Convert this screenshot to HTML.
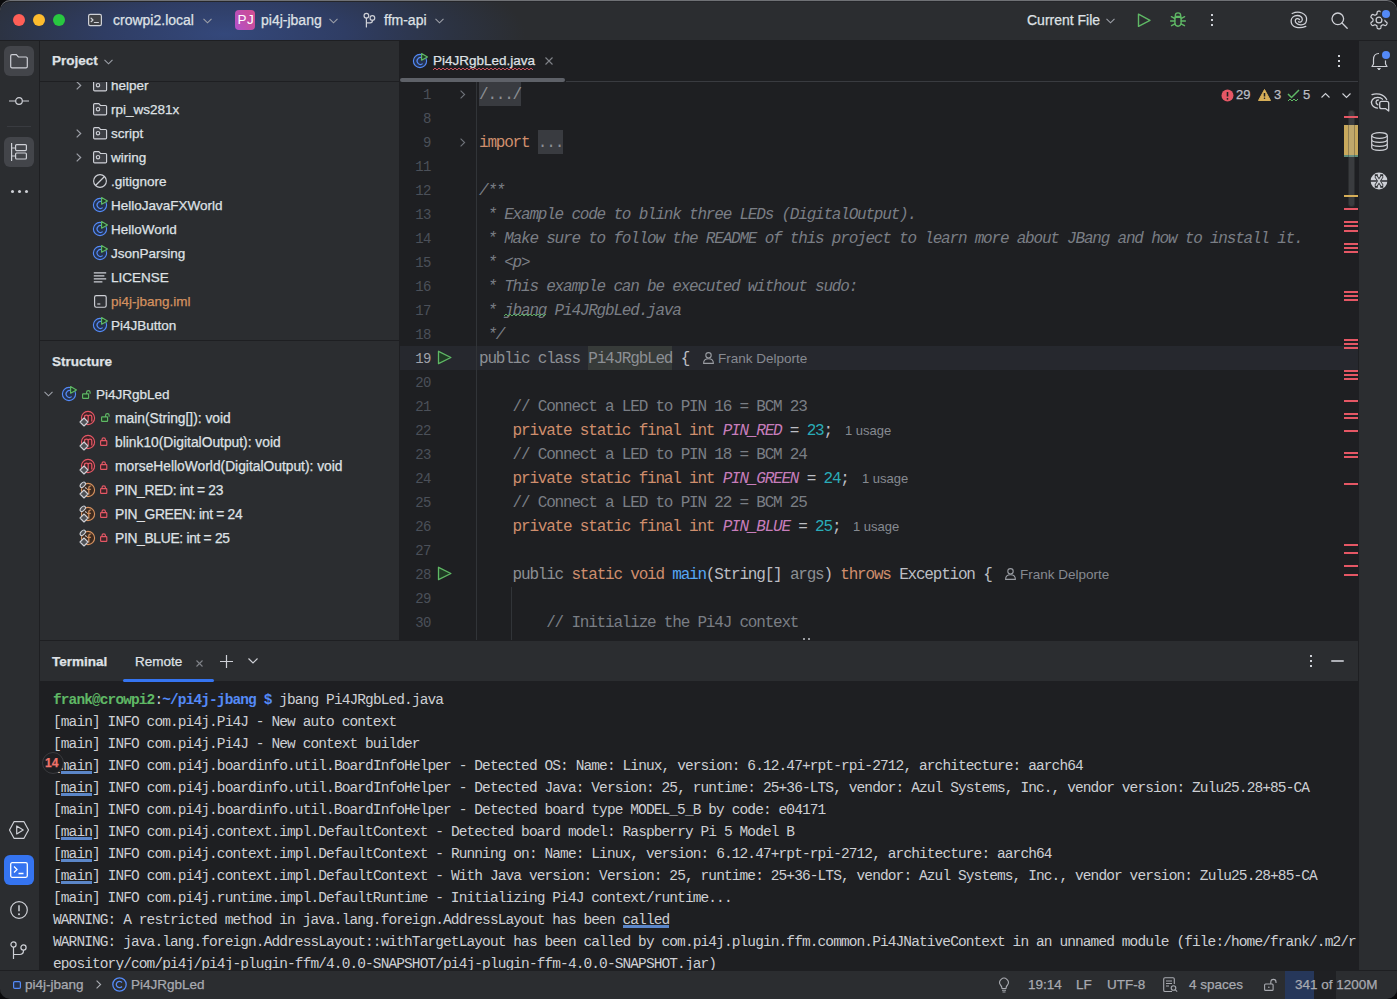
<!DOCTYPE html>
<html><head><meta charset="utf-8">
<style>
*{margin:0;padding:0;box-sizing:border-box}
html,body{width:1397px;height:999px;overflow:hidden;background:#0a0a0c}
body{position:relative;font-family:"Liberation Sans",sans-serif;color:#DFE1E5;font-size:13px}
.a{position:absolute}
svg{position:absolute;overflow:visible}
#win{position:absolute;left:0;top:0;width:1397px;height:999px;background:#2B2D30;border-radius:10px;overflow:hidden}
#title{left:0;top:0;width:1397px;height:40px;background:radial-gradient(ellipse 300px 85px at 225px 34px,#34487B 0%,#2F3D64 40%,#2C3343 75%,#2B2D30 100%)}
.code{position:absolute;left:479px;font-family:"Liberation Mono",monospace;font-size:16px;letter-spacing:-1.2px;white-space:pre;line-height:24px;height:24px;color:#BCBEC4}
.term{position:absolute;left:53px;font-family:"Liberation Mono",monospace;font-size:14.5px;letter-spacing:-0.9px;white-space:pre;line-height:22px;height:22px;color:#CDCFD4}
u{text-decoration:none;position:relative}u::after{content:"";position:absolute;left:0;right:0;top:13px;height:3px;background:#5B86C8}
.t{position:absolute;white-space:nowrap;line-height:16px;-webkit-text-stroke:0.25px currentColor}
.ln{position:absolute;font-family:"Liberation Mono",monospace;font-size:14px;letter-spacing:-0.5px;color:#4B5059;text-align:right;width:60px;left:371px;line-height:24px}
.kw{color:#CF8E6D}.cm{color:#7A7E85}.doc{color:#7A7E85;font-style:italic}.st{color:#C77DBB;font-style:italic}.nu{color:#2AACB8}.fn{color:#56A8F5}.gr{color:#8C8F94}
.hint{position:absolute;font-family:"Liberation Sans",sans-serif;font-size:13px;color:#868A91;white-space:nowrap;line-height:24px;margin-top:1px}
.ic{position:absolute}
</style></head><body>
<div id="win">
<div class="a" id="title" style="left:0;top:0;width:1397px;height:40px"></div>
<div class="a" style="left:0;top:0;width:1397px;height:1px;background:#4a4c52;opacity:.6"></div>
<div class="a" style="left:0;top:40px;width:1397px;height:1px;background:#1E1F22"></div>
<div class="a" style="left:13px;top:14px;width:12px;height:12px;border-radius:50%;background:#FF5F57"></div>
<div class="a" style="left:33px;top:14px;width:12px;height:12px;border-radius:50%;background:#FEBC2E"></div>
<div class="a" style="left:53px;top:14px;width:12px;height:12px;border-radius:50%;background:#28C840"></div>
<svg style="left:84px;top:8px" width="24" height="24"><rect x="4.6" y="6.4" width="12.8" height="11.2" rx="1.6" fill="#404145" stroke="#CED0D6" stroke-width="1.2"/><path d="M7.1 10.2l1.9 1.75-1.9 1.75" fill="none" stroke="#CED0D6" stroke-width="1.2" stroke-linecap="round" stroke-linejoin="round"/><path d="M10.4 14.5h4" stroke="#CED0D6" stroke-width="1.2" stroke-linecap="round"/></svg>
<div class="t" style="left:113px;top:12px;font-size:14px;color:#DFE1E5;">crowpi2.local</div>
<svg style="left:203px;top:18px" width="9" height="6"><path d="M.5 .8l4 4 4-4" fill="none" stroke="#9DA0A8" stroke-width="1.1"/></svg>
<div class="a" style="left:235px;top:10px;width:20px;height:20px;border-radius:4px;background:linear-gradient(60deg,#B152CC,#C84D9E 70%,#D24F92)"></div>
<div class="t" style="left:237.5px;top:12.3px;font-size:13.5px;color:#fff;letter-spacing:.4px;-webkit-text-stroke:0">PJ</div>
<div class="t" style="left:261px;top:12px;font-size:14px;color:#DFE1E5;">pi4j-jbang</div>
<svg style="left:329px;top:18px" width="9" height="6"><path d="M.5 .8l4 4 4-4" fill="none" stroke="#9DA0A8" stroke-width="1.1"/></svg>
<svg style="left:358px;top:8px" width="24" height="24"><circle cx="8.4" cy="7.7" r="2.35" fill="none" stroke="#CED0D6" stroke-width="1.2"/><circle cx="14.4" cy="9.9" r="2.35" fill="none" stroke="#CED0D6" stroke-width="1.2"/><path d="M8.4 10.05V19M14.4 12.25v.6q0 2-2.2 2H8.4" fill="none" stroke="#CED0D6" stroke-width="1.2" stroke-linecap="round"/></svg>
<div class="t" style="left:384px;top:12px;font-size:14px;color:#DFE1E5;">ffm-api</div>
<svg style="left:435px;top:18px" width="9" height="6"><path d="M.5 .8l4 4 4-4" fill="none" stroke="#9DA0A8" stroke-width="1.1"/></svg>
<div class="t" style="left:1027px;top:12px;font-size:14px;color:#DFE1E5;">Current File</div>
<svg style="left:1106px;top:18px" width="9" height="6"><path d="M.5 .8l4 4 4-4" fill="none" stroke="#9DA0A8" stroke-width="1.1"/></svg>
<svg style="left:1137px;top:13px" width="15" height="15"><path d="M1.5 1.2v12.2l11.5-6.1z" fill="none" stroke="#5FB865" stroke-width="1.4" stroke-linejoin="round"/></svg>
<svg style="left:1170px;top:12px" width="16" height="16"><path d="M5.3 4.4V3.6a2.7 2.7 0 0 1 5.4 0v.8z" fill="none" stroke="#5FB865" stroke-width="1.35" stroke-linejoin="round"/><path d="M4.9 5.2h6.2v5.9a3.1 3.1 0 0 1-6.2 0z" fill="none" stroke="#5FB865" stroke-width="1.35" stroke-linejoin="round"/><path d="M4.9 6.6L1.4 4.6M4.9 9H.6M4.9 11.8L1.5 13.7M11.1 6.6l3.5-2M11.1 9h4.3M11.1 11.8l3.4 1.9" fill="none" stroke="#5FB865" stroke-width="1.35" stroke-linecap="round"/></svg>
<div class="a" style="left:1211px;top:14px;width:2px;height:2px;background:#CED0D6;box-shadow:0 5px 0 #CED0D6,0 10px 0 #CED0D6"></div>
<svg style="left:1287px;top:8px" width="24" height="24"><path d="M5.2 5.5C8 4.2 12 3.8 15 5C18.5 6.5 20 9.5 19.5 12.5C19 15.5 16.5 17 13.5 16.8C10 16.6 8 14.5 8.3 12.3C8.6 10.5 11 10 12.5 11.5M18.8 18.3C16 19.5 12.5 20 9.5 19.3C6 18.5 4 16 4.1 12.7C4.2 9.5 7 7.5 10.3 7.5C13.5 7.5 15.5 9.5 15.3 11.8C15.1 13.8 13 14.8 11.5 13.8" fill="none" stroke="#CED0D6" stroke-width="1.3" stroke-linecap="round"/></svg>
<svg style="left:1331px;top:12px" width="17" height="17"><circle cx="6.8" cy="6.8" r="5.8" fill="none" stroke="#CED0D6" stroke-width="1.3"/><path d="M11 11l5.2 5.2" stroke="#CED0D6" stroke-width="1.3" stroke-linecap="round"/></svg>
<svg style="left:1370px;top:11px" width="18" height="18"><path d="M14.99 9.00 L14.99 9.16 L14.99 9.31 L14.99 9.47 L15.00 9.63 L15.02 9.79 L15.08 9.96 L15.19 10.15 L15.40 10.36 L15.73 10.62 L16.15 10.92 L16.56 11.24 L16.85 11.55 L17.02 11.84 L17.07 12.10 L17.06 12.34 L17.01 12.57 L16.94 12.79 L16.85 13.00 L16.74 13.21 L16.63 13.41 L16.51 13.60 L16.39 13.80 L16.25 13.98 L16.09 14.15 L15.92 14.31 L15.72 14.44 L15.47 14.52 L15.14 14.53 L14.72 14.42 L14.23 14.23 L13.76 14.02 L13.38 13.86 L13.09 13.79 L12.87 13.78 L12.70 13.82 L12.54 13.88 L12.40 13.95 L12.26 14.03 L12.13 14.10 L11.99 14.18 L11.86 14.26 L11.72 14.34 L11.59 14.42 L11.45 14.51 L11.32 14.61 L11.21 14.74 L11.10 14.94 L11.02 15.22 L10.97 15.63 L10.92 16.15 L10.84 16.66 L10.72 17.08 L10.55 17.36 L10.35 17.54 L10.14 17.65 L9.92 17.72 L9.69 17.77 L9.46 17.79 L9.23 17.81 L9.00 17.81 L8.77 17.81 L8.54 17.79 L8.31 17.77 L8.08 17.72 L7.86 17.65 L7.65 17.54 L7.45 17.36 L7.28 17.08 L7.16 16.66 L7.08 16.15 L7.03 15.63 L6.98 15.22 L6.90 14.94 L6.79 14.74 L6.68 14.61 L6.55 14.51 L6.41 14.42 L6.28 14.34 L6.14 14.26 L6.01 14.18 L5.87 14.10 L5.74 14.03 L5.60 13.95 L5.46 13.88 L5.30 13.82 L5.13 13.78 L4.91 13.79 L4.62 13.86 L4.24 14.02 L3.77 14.23 L3.28 14.42 L2.86 14.53 L2.53 14.52 L2.28 14.44 L2.08 14.31 L1.91 14.15 L1.75 13.98 L1.61 13.80 L1.49 13.60 L1.37 13.41 L1.26 13.21 L1.15 13.00 L1.06 12.79 L0.99 12.57 L0.94 12.34 L0.93 12.10 L0.98 11.84 L1.15 11.55 L1.44 11.24 L1.85 10.92 L2.27 10.62 L2.60 10.36 L2.81 10.15 L2.92 9.96 L2.98 9.79 L3.00 9.63 L3.01 9.47 L3.01 9.31 L3.01 9.16 L3.01 9.00 L3.01 8.84 L3.01 8.69 L3.01 8.53 L3.00 8.37 L2.98 8.21 L2.92 8.04 L2.81 7.85 L2.60 7.64 L2.27 7.38 L1.85 7.08 L1.44 6.76 L1.15 6.45 L0.98 6.16 L0.93 5.90 L0.94 5.66 L0.99 5.43 L1.06 5.21 L1.15 5.00 L1.26 4.79 L1.37 4.59 L1.49 4.40 L1.61 4.20 L1.75 4.02 L1.91 3.85 L2.08 3.69 L2.28 3.56 L2.53 3.48 L2.86 3.47 L3.28 3.58 L3.77 3.77 L4.24 3.98 L4.62 4.14 L4.91 4.21 L5.13 4.22 L5.30 4.18 L5.46 4.12 L5.60 4.05 L5.74 3.97 L5.87 3.90 L6.01 3.82 L6.14 3.74 L6.28 3.66 L6.41 3.58 L6.55 3.49 L6.68 3.39 L6.79 3.26 L6.90 3.06 L6.98 2.78 L7.03 2.37 L7.08 1.85 L7.16 1.34 L7.28 0.92 L7.45 0.64 L7.65 0.46 L7.86 0.35 L8.08 0.28 L8.31 0.23 L8.54 0.21 L8.77 0.19 L9.00 0.19 L9.23 0.19 L9.46 0.21 L9.69 0.23 L9.92 0.28 L10.14 0.35 L10.35 0.46 L10.55 0.64 L10.72 0.92 L10.84 1.34 L10.92 1.85 L10.97 2.37 L11.02 2.78 L11.10 3.06 L11.21 3.26 L11.32 3.39 L11.45 3.49 L11.59 3.58 L11.72 3.66 L11.86 3.74 L11.99 3.82 L12.13 3.90 L12.26 3.97 L12.40 4.05 L12.54 4.12 L12.70 4.18 L12.87 4.22 L13.09 4.21 L13.38 4.14 L13.76 3.98 L14.23 3.77 L14.72 3.58 L15.14 3.47 L15.47 3.48 L15.72 3.56 L15.92 3.69 L16.09 3.85 L16.25 4.02 L16.39 4.20 L16.51 4.40 L16.63 4.59 L16.74 4.79 L16.85 5.00 L16.94 5.21 L17.01 5.43 L17.06 5.66 L17.07 5.90 L17.02 6.16 L16.85 6.45 L16.56 6.76 L16.15 7.08 L15.73 7.38 L15.40 7.64 L15.19 7.85 L15.08 8.04 L15.02 8.21 L15.00 8.37 L14.99 8.53 L14.99 8.69 L14.99 8.84 L14.99 9.00z" fill="none" stroke="#CED0D6" stroke-width="1.25" stroke-linejoin="round"/><circle cx="9" cy="9" r="2.9" fill="none" stroke="#CED0D6" stroke-width="1.25"/></svg>
<div class="a" style="left:1381.5px;top:9.5px;width:8px;height:8px;border-radius:50%;background:#548AF7;box-shadow:0 0 0 2px #2B2D30"></div>
<div class="a" style="left:39px;top:41px;width:1px;height:930px;background:#1E1F22"></div>
<div class="a" style="left:400px;top:41px;width:959px;height:599px;background:#1E1F22"></div>
<div class="a" style="left:399px;top:41px;width:1px;height:599px;background:#1E1F22"></div>
<div class="a" style="left:0;top:0;width:1358px;height:640px;overflow:hidden">
<div class="a" style="left:400px;top:346px;width:958px;height:24px;background:#26282E"></div>
<div class="a" style="left:476px;top:82px;width:1px;height:558px;background:#313438"></div>
<div class="a" style="left:479px;top:82px;width:42px;height:24px;background:#393B40"></div>
<div class="a" style="left:537.8px;top:130px;width:25.2px;height:24px;background:#393B40"></div>
<div class="a" style="left:588.2px;top:346px;width:84px;height:24px;background:#373B39"></div>
<div class="ln" style="top:83px;color:#4B5059">1</div>
<div class="ln" style="top:107px;color:#4B5059">8</div>
<div class="ln" style="top:131px;color:#4B5059">9</div>
<div class="ln" style="top:155px;color:#4B5059">11</div>
<div class="ln" style="top:179px;color:#4B5059">12</div>
<div class="ln" style="top:203px;color:#4B5059">13</div>
<div class="ln" style="top:227px;color:#4B5059">14</div>
<div class="ln" style="top:251px;color:#4B5059">15</div>
<div class="ln" style="top:275px;color:#4B5059">16</div>
<div class="ln" style="top:299px;color:#4B5059">17</div>
<div class="ln" style="top:323px;color:#4B5059">18</div>
<div class="ln" style="top:347px;color:#A1A3AB">19</div>
<div class="ln" style="top:371px;color:#4B5059">20</div>
<div class="ln" style="top:395px;color:#4B5059">21</div>
<div class="ln" style="top:419px;color:#4B5059">22</div>
<div class="ln" style="top:443px;color:#4B5059">23</div>
<div class="ln" style="top:467px;color:#4B5059">24</div>
<div class="ln" style="top:491px;color:#4B5059">25</div>
<div class="ln" style="top:515px;color:#4B5059">26</div>
<div class="ln" style="top:539px;color:#4B5059">27</div>
<div class="ln" style="top:563px;color:#4B5059">28</div>
<div class="ln" style="top:587px;color:#4B5059">29</div>
<div class="ln" style="top:611px;color:#4B5059">30</div>
<div class="ln" style="top:635px;color:#4B5059">31</div>
<div class="code" style="top:83px"><span style="color:#8C8F94">/.../</span></div>
<div class="code" style="top:131px"><span class="kw">import</span> <span style="color:#8C8F94">...</span></div>
<div class="code" style="top:179px"><span class="doc">/**</span></div>
<div class="code" style="top:203px"><span class="doc"> * Example code to blink three LEDs (DigitalOutput).</span></div>
<div class="code" style="top:227px"><span class="doc"> * Make sure to follow the README of this project to learn more about JBang and how to install it.</span></div>
<div class="code" style="top:251px"><span class="doc"> * &lt;p&gt;</span></div>
<div class="code" style="top:275px"><span class="doc"> * This example can be executed without sudo:</span></div>
<div class="code" style="top:299px"><span class="doc"> * jbang Pi4JRgbLed.java</span></div>
<div class="code" style="top:323px"><span class="doc"> */</span></div>
<div class="code" style="top:347px"><span class="gr">public class </span><span class="gr">Pi4JRgbLed</span> {</div>
<div class="code" style="top:395px"><span class="cm">    // Connect a LED to PIN 16 = BCM 23</span></div>
<div class="code" style="top:419px">    <span class="kw">private static final int </span><span class="st">PIN_RED</span> = <span class="nu">23</span>;</div>
<div class="code" style="top:443px"><span class="cm">    // Connect a LED to PIN 18 = BCM 24</span></div>
<div class="code" style="top:467px">    <span class="kw">private static final int </span><span class="st">PIN_GREEN</span> = <span class="nu">24</span>;</div>
<div class="code" style="top:491px"><span class="cm">    // Connect a LED to PIN 22 = BCM 25</span></div>
<div class="code" style="top:515px">    <span class="kw">private static final int </span><span class="st">PIN_BLUE</span> = <span class="nu">25</span>;</div>
<div class="code" style="top:563px">    <span class="gr">public </span><span class="kw">static void </span><span class="fn">main</span>(String[] <span class="gr">args</span>) <span class="kw">throws</span> Exception {</div>
<div class="code" style="top:611px"><span class="cm">        // Initialize the Pi4J context</span></div>
</div>
<div class="a" style="left:40px;top:81px;width:359px;height:1px;background:#1E1F22"></div>
<div class="a" style="left:40px;top:640px;width:1319px;height:1px;background:#1E1F22"></div>
<div class="a" style="left:40px;top:681px;width:1319px;height:289px;background:#1E1F22"></div>
<div class="a" style="left:1358px;top:641px;width:1px;height:40px;background:#1E1F22"></div>
<div class="a" style="left:40px;top:681px;width:1318px;height:289px;overflow:hidden">
<div class="term" style="top:8px;left:13px"><b style="color:#5FB865">frank@crowpi2</b>:<b style="color:#548AF7">~/pi4j-jbang $</b> jbang Pi4JRgbLed.java</div>
<div class="term" style="top:30px;left:13px">[main] INFO com.pi4j.Pi4J - New auto context</div>
<div class="term" style="top:52px;left:13px">[main] INFO com.pi4j.Pi4J - New context builder</div>
<div class="term" style="top:74px;left:13px">[<u>main</u>] INFO com.pi4j.boardinfo.util.BoardInfoHelper - Detected OS: Name: Linux, version: 6.12.47+rpt-rpi-2712, architecture: aarch64</div>
<div class="term" style="top:96px;left:13px">[<u>main</u>] INFO com.pi4j.boardinfo.util.BoardInfoHelper - Detected Java: Version: 25, runtime: 25+36-LTS, vendor: Azul Systems, Inc., vendor version: Zulu25.28+85-CA</div>
<div class="term" style="top:118px;left:13px">[main] INFO com.pi4j.boardinfo.util.BoardInfoHelper - Detected board type MODEL_5_B by code: e04171</div>
<div class="term" style="top:140px;left:13px">[<u>main</u>] INFO com.pi4j.context.impl.DefaultContext - Detected board model: Raspberry Pi 5 Model B</div>
<div class="term" style="top:162px;left:13px">[<u>main</u>] INFO com.pi4j.context.impl.DefaultContext - Running on: Name: Linux, version: 6.12.47+rpt-rpi-2712, architecture: aarch64</div>
<div class="term" style="top:184px;left:13px">[<u>main</u>] INFO com.pi4j.context.impl.DefaultContext - With Java version: Version: 25, runtime: 25+36-LTS, vendor: Azul Systems, Inc., vendor version: Zulu25.28+85-CA</div>
<div class="term" style="top:206px;left:13px">[main] INFO com.pi4j.runtime.impl.DefaultRuntime - Initializing Pi4J context/runtime...</div>
<div class="term" style="top:228px;left:13px">WARNING: A restricted method in java.lang.foreign.AddressLayout has been <u>called</u></div>
<div class="term" style="top:250px;left:13px">WARNING: java.lang.foreign.AddressLayout::withTargetLayout has been called by com.pi4j.plugin.ffm.common.Pi4JNativeContext in an unnamed module (file:/home/frank/.m2/r</div>
<div class="term" style="top:272px;left:13px">epository/com/pi4j/pi4j-plugin-ffm/4.0.0-SNAPSHOT/pi4j-plugin-ffm-4.0.0-SNAPSHOT.jar)</div>
</div>
<div class="a" style="left:42px;top:752px;width:22px;height:22px;border-radius:50%;background:#1E1F22;border:1px solid #3A3B3F"></div>
<div class="t" style="left:45px;top:757px;font-size:12px;color:#F0736B;font-weight:bold;line-height:12px">14</div>
<div class="t" style="left:52px;top:654px;font-size:13.5px;color:#DFE1E5;font-weight:bold">Terminal</div>
<div class="t" style="left:135px;top:654px;font-size:13.5px;color:#DFE1E5;">Remote</div>
<svg style="left:196px;top:660px" width="7" height="7"><path d="M.5 .5l6 6M6.5 .5l-6 6" stroke="#808389" stroke-width="1.1"/></svg>
<svg style="left:220px;top:655px" width="13" height="13"><path d="M6.5 0v13M0 6.5h13" stroke="#CED0D6" stroke-width="1.2"/></svg>
<svg style="left:248px;top:658px" width="10" height="6"><path d="M.5 .5l4.5 4.5 4.5-4.5" fill="none" stroke="#CED0D6" stroke-width="1.2"/></svg>
<div class="a" style="left:123px;top:679px;width:91px;height:3px;border-radius:2px;background:#3574F0"></div>
<div class="a" style="left:1310px;top:655px;width:2px;height:2px;background:#CED0D6;box-shadow:0 5px 0 #CED0D6,0 10px 0 #CED0D6"></div>
<div class="a" style="left:1331px;top:660px;width:12.5px;height:2px;border-radius:1px;background:#AEB0B6"></div>
<div class="t" style="left:52px;top:53px;font-size:13.5px;color:#DFE1E5;font-weight:bold">Project</div>
<svg style="left:104px;top:59px" width="9" height="6"><path d="M.5 .8l4 4 4-4" fill="none" stroke="#9DA0A8" stroke-width="1.1"/></svg>
<div class="a" style="left:0px;top:82px;width:399px;height:258px;overflow:hidden">
<svg style="left:76px;top:-1px" width="6" height="9"><path d="M.7 .6l4 3.9-4 3.9" fill="none" stroke="#9DA0A8" stroke-width="1.2"/></svg><svg style="left:93px;top:-3px" width="14" height="12"><path d="M.6 1.7q0-1.1 1.1-1.1h4.1l1.7 1.9h5q1.1 0 1.1 1.1v7.2q0 1.1-1.1 1.1H1.7q-1.1 0-1.1-1.1z" fill="#3D3F44" stroke="#CED0D6" stroke-width="1.15"/><circle cx="5" cy="6.2" r="1.7" fill="none" stroke="#CED0D6" stroke-width="1.1"/></svg><div class="t" style="left:111px;top:-4px;font-size:13.5px;color:#DFE1E5">helper</div>
<svg style="left:93px;top:21px" width="14" height="12"><path d="M.6 1.7q0-1.1 1.1-1.1h4.1l1.7 1.9h5q1.1 0 1.1 1.1v7.2q0 1.1-1.1 1.1H1.7q-1.1 0-1.1-1.1z" fill="#3D3F44" stroke="#CED0D6" stroke-width="1.15"/><circle cx="5" cy="6.2" r="1.7" fill="none" stroke="#CED0D6" stroke-width="1.1"/></svg><div class="t" style="left:111px;top:20px;font-size:13.5px;color:#DFE1E5">rpi_ws281x</div>
<svg style="left:76px;top:47px" width="6" height="9"><path d="M.7 .6l4 3.9-4 3.9" fill="none" stroke="#9DA0A8" stroke-width="1.2"/></svg><svg style="left:93px;top:45px" width="14" height="12"><path d="M.6 1.7q0-1.1 1.1-1.1h4.1l1.7 1.9h5q1.1 0 1.1 1.1v7.2q0 1.1-1.1 1.1H1.7q-1.1 0-1.1-1.1z" fill="#3D3F44" stroke="#CED0D6" stroke-width="1.15"/><circle cx="5" cy="6.2" r="1.7" fill="none" stroke="#CED0D6" stroke-width="1.1"/></svg><div class="t" style="left:111px;top:44px;font-size:13.5px;color:#DFE1E5">script</div>
<svg style="left:76px;top:71px" width="6" height="9"><path d="M.7 .6l4 3.9-4 3.9" fill="none" stroke="#9DA0A8" stroke-width="1.2"/></svg><svg style="left:93px;top:69px" width="14" height="12"><path d="M.6 1.7q0-1.1 1.1-1.1h4.1l1.7 1.9h5q1.1 0 1.1 1.1v7.2q0 1.1-1.1 1.1H1.7q-1.1 0-1.1-1.1z" fill="#3D3F44" stroke="#CED0D6" stroke-width="1.15"/><circle cx="5" cy="6.2" r="1.7" fill="none" stroke="#CED0D6" stroke-width="1.1"/></svg><div class="t" style="left:111px;top:68px;font-size:13.5px;color:#DFE1E5">wiring</div>
<svg style="left:93px;top:92px" width="14" height="14"><circle cx="7" cy="7" r="6.4" fill="none" stroke="#CED0D6" stroke-width="1.15"/><path d="M2.5 11.5l9-9" stroke="#CED0D6" stroke-width="1.15"/></svg><div class="t" style="left:111px;top:92px;font-size:13.5px;color:#DFE1E5">.gitignore</div>
<svg style="left:92px;top:114px" width="17" height="17"><circle cx="8" cy="9" r="6.6" fill="#25324D" stroke="#548AF7" stroke-width="1.15"/><path d="M10.7 6.4A3.4 3.4 0 1 0 10.7 11.6" fill="none" stroke="#548AF7" stroke-width="1.15"/><path d="M9.6 1.3v7.1l6.1-3.5z" fill="#1F3A24" stroke="#1E1F22" stroke-width="2.6" stroke-linejoin="round" opacity=".0"/><path d="M9.6 1.5v6.7l5.9-3.3z" fill="#1F3A24" stroke="#5FB865" stroke-width="1.15" stroke-linejoin="round"/></svg><div class="t" style="left:111px;top:116px;font-size:13.5px;color:#DFE1E5">HelloJavaFXWorld</div>
<svg style="left:92px;top:138px" width="17" height="17"><circle cx="8" cy="9" r="6.6" fill="#25324D" stroke="#548AF7" stroke-width="1.15"/><path d="M10.7 6.4A3.4 3.4 0 1 0 10.7 11.6" fill="none" stroke="#548AF7" stroke-width="1.15"/><path d="M9.6 1.3v7.1l6.1-3.5z" fill="#1F3A24" stroke="#1E1F22" stroke-width="2.6" stroke-linejoin="round" opacity=".0"/><path d="M9.6 1.5v6.7l5.9-3.3z" fill="#1F3A24" stroke="#5FB865" stroke-width="1.15" stroke-linejoin="round"/></svg><div class="t" style="left:111px;top:140px;font-size:13.5px;color:#DFE1E5">HelloWorld</div>
<svg style="left:92px;top:162px" width="17" height="17"><circle cx="8" cy="9" r="6.6" fill="#25324D" stroke="#548AF7" stroke-width="1.15"/><path d="M10.7 6.4A3.4 3.4 0 1 0 10.7 11.6" fill="none" stroke="#548AF7" stroke-width="1.15"/><path d="M9.6 1.3v7.1l6.1-3.5z" fill="#1F3A24" stroke="#1E1F22" stroke-width="2.6" stroke-linejoin="round" opacity=".0"/><path d="M9.6 1.5v6.7l5.9-3.3z" fill="#1F3A24" stroke="#5FB865" stroke-width="1.15" stroke-linejoin="round"/></svg><div class="t" style="left:111px;top:164px;font-size:13.5px;color:#DFE1E5">JsonParsing</div>
<svg style="left:93px;top:190px" width="14" height="11"><path d="M.8 .8h12.4M.8 3.8h10.6M.8 6.8h12.4M.8 9.8h8.6" stroke="#CED0D6" stroke-width="1.15"/></svg><div class="t" style="left:111px;top:188px;font-size:13.5px;color:#DFE1E5">LICENSE</div>
<svg style="left:94px;top:213px" width="13" height="13"><rect x=".6" y=".6" width="11.6" height="11.6" rx="1.6" fill="#2F3135" stroke="#CED0D6" stroke-width="1.15"/><path d="M3.3 9h3" stroke="#CED0D6" stroke-width="1.2"/></svg><div class="t" style="left:111px;top:212px;font-size:13.5px;color:#D5915F">pi4j-jbang.iml</div>
<svg style="left:92px;top:234px" width="17" height="17"><circle cx="8" cy="9" r="6.6" fill="#25324D" stroke="#548AF7" stroke-width="1.15"/><path d="M10.7 6.4A3.4 3.4 0 1 0 10.7 11.6" fill="none" stroke="#548AF7" stroke-width="1.15"/><path d="M9.6 1.3v7.1l6.1-3.5z" fill="#1F3A24" stroke="#1E1F22" stroke-width="2.6" stroke-linejoin="round" opacity=".0"/><path d="M9.6 1.5v6.7l5.9-3.3z" fill="#1F3A24" stroke="#5FB865" stroke-width="1.15" stroke-linejoin="round"/></svg><div class="t" style="left:111px;top:236px;font-size:13.5px;color:#DFE1E5">Pi4JButton</div>
</div>
<div class="a" style="left:40px;top:340px;width:359px;height:1px;background:#1E1F22"></div>
<div class="t" style="left:52px;top:354px;font-size:13.5px;color:#DFE1E5;font-weight:bold">Structure</div>
<svg style="left:44px;top:391px" width="9" height="6"><path d="M.5 .8l4 4 4-4" fill="none" stroke="#9DA0A8" stroke-width="1.1"/></svg>
<svg style="left:61px;top:385px" width="17" height="17"><circle cx="8" cy="9" r="6.6" fill="#25324D" stroke="#548AF7" stroke-width="1.15"/><path d="M10.7 6.4A3.4 3.4 0 1 0 10.7 11.6" fill="none" stroke="#548AF7" stroke-width="1.15"/><path d="M9.6 1.3v7.1l6.1-3.5z" fill="#1F3A24" stroke="#1E1F22" stroke-width="2.6" stroke-linejoin="round" opacity=".0"/><path d="M9.6 1.5v6.7l5.9-3.3z" fill="#1F3A24" stroke="#5FB865" stroke-width="1.15" stroke-linejoin="round"/></svg><svg style="left:82px;top:390px" width="9" height="9"><rect x=".6" y="3.9" width="6" height="4.5" rx=".6" fill="#1F3A24" stroke="#5FB865" stroke-width="1.15"/><path d="M4.6 3.9V2.3a1.75 1.75 0 0 1 3.5 0v1.4" fill="none" stroke="#5FB865" stroke-width="1.15"/></svg><div class="t" style="left:96px;top:387px;font-size:13.5px;color:#DFE1E5">Pi4JRgbLed</div>
<svg style="left:79px;top:409px" width="18" height="18"><circle cx="9" cy="9" r="6.6" fill="#3B2326" stroke="#E55765" stroke-width="1.15"/><path d="M5.6 12.4V6.4M5.6 7.7q0-1.6 1.8-1.6t1.8 1.6v4.7M9.2 7.7q0-1.6 1.8-1.6t1.8 1.6v4.7" fill="none" stroke="#E55765" stroke-width="1.2"/><path d="M5 9l4 4-4 4-4-4z" fill="#4E5055" stroke="#CED0D6" stroke-width="1.1" stroke-linejoin="round"/></svg><svg style="left:101px;top:413px" width="9" height="9"><rect x=".6" y="3.9" width="6" height="4.5" rx=".6" fill="#1F3A24" stroke="#5FB865" stroke-width="1.15"/><path d="M4.6 3.9V2.3a1.75 1.75 0 0 1 3.5 0v1.4" fill="none" stroke="#5FB865" stroke-width="1.15"/></svg><div class="t" style="left:115px;top:411px;font-size:13.8px;color:#DFE1E5;">main(String[]): void</div>
<svg style="left:79px;top:433px" width="18" height="18"><circle cx="9" cy="9" r="6.6" fill="#3B2326" stroke="#E55765" stroke-width="1.15"/><path d="M5.6 12.4V6.4M5.6 7.7q0-1.6 1.8-1.6t1.8 1.6v4.7M9.2 7.7q0-1.6 1.8-1.6t1.8 1.6v4.7" fill="none" stroke="#E55765" stroke-width="1.2"/><path d="M5 9l4 4-4 4-4-4z" fill="#4E5055" stroke="#CED0D6" stroke-width="1.1" stroke-linejoin="round"/></svg><svg style="left:100px;top:437px" width="8" height="9"><rect x=".6" y="3.6" width="6.2" height="4.8" rx=".6" fill="#3A2327" stroke="#E55765" stroke-width="1.15"/><path d="M2 3.6V2.5a1.7 1.7 0 0 1 3.4 0v1.1" fill="none" stroke="#E55765" stroke-width="1.15"/></svg><div class="t" style="left:115px;top:435px;font-size:13.8px;color:#DFE1E5;">blink10(DigitalOutput): void</div>
<svg style="left:79px;top:457px" width="18" height="18"><circle cx="9" cy="9" r="6.6" fill="#3B2326" stroke="#E55765" stroke-width="1.15"/><path d="M5.6 12.4V6.4M5.6 7.7q0-1.6 1.8-1.6t1.8 1.6v4.7M9.2 7.7q0-1.6 1.8-1.6t1.8 1.6v4.7" fill="none" stroke="#E55765" stroke-width="1.2"/><path d="M5 9l4 4-4 4-4-4z" fill="#4E5055" stroke="#CED0D6" stroke-width="1.1" stroke-linejoin="round"/></svg><svg style="left:100px;top:461px" width="8" height="9"><rect x=".6" y="3.6" width="6.2" height="4.8" rx=".6" fill="#3A2327" stroke="#E55765" stroke-width="1.15"/><path d="M2 3.6V2.5a1.7 1.7 0 0 1 3.4 0v1.1" fill="none" stroke="#E55765" stroke-width="1.15"/></svg><div class="t" style="left:115px;top:459px;font-size:13.8px;color:#DFE1E5;">morseHelloWorld(DigitalOutput): void</div>
<svg style="left:79px;top:481px" width="18" height="18"><circle cx="9" cy="9" r="6.6" fill="#3D2A1F" stroke="#D5915F" stroke-width="1.15"/><path d="M9.8 13.5V7q0-2 2-2h.4M8 8.3h3.8" fill="none" stroke="#D5915F" stroke-width="1.2"/><ellipse cx="3.8" cy="3.8" rx="3.2" ry="1.9" transform="rotate(-45 3.8 3.8)" fill="#4E5055" stroke="#CED0D6" stroke-width="1.1"/><path d="M6.3 6.4l1.3 1.4" stroke="#CED0D6" stroke-width="1.1"/><path d="M5 9l4 4-4 4-4-4z" fill="#4E5055" stroke="#CED0D6" stroke-width="1.1" stroke-linejoin="round"/></svg><svg style="left:100px;top:485px" width="8" height="9"><rect x=".6" y="3.6" width="6.2" height="4.8" rx=".6" fill="#3A2327" stroke="#E55765" stroke-width="1.15"/><path d="M2 3.6V2.5a1.7 1.7 0 0 1 3.4 0v1.1" fill="none" stroke="#E55765" stroke-width="1.15"/></svg><div class="t" style="left:115px;top:483px;font-size:13.8px;color:#DFE1E5;letter-spacing:-0.3px;">PIN_RED: int = 23</div>
<svg style="left:79px;top:505px" width="18" height="18"><circle cx="9" cy="9" r="6.6" fill="#3D2A1F" stroke="#D5915F" stroke-width="1.15"/><path d="M9.8 13.5V7q0-2 2-2h.4M8 8.3h3.8" fill="none" stroke="#D5915F" stroke-width="1.2"/><ellipse cx="3.8" cy="3.8" rx="3.2" ry="1.9" transform="rotate(-45 3.8 3.8)" fill="#4E5055" stroke="#CED0D6" stroke-width="1.1"/><path d="M6.3 6.4l1.3 1.4" stroke="#CED0D6" stroke-width="1.1"/><path d="M5 9l4 4-4 4-4-4z" fill="#4E5055" stroke="#CED0D6" stroke-width="1.1" stroke-linejoin="round"/></svg><svg style="left:100px;top:509px" width="8" height="9"><rect x=".6" y="3.6" width="6.2" height="4.8" rx=".6" fill="#3A2327" stroke="#E55765" stroke-width="1.15"/><path d="M2 3.6V2.5a1.7 1.7 0 0 1 3.4 0v1.1" fill="none" stroke="#E55765" stroke-width="1.15"/></svg><div class="t" style="left:115px;top:507px;font-size:13.8px;color:#DFE1E5;letter-spacing:-0.3px;">PIN_GREEN: int = 24</div>
<svg style="left:79px;top:529px" width="18" height="18"><circle cx="9" cy="9" r="6.6" fill="#3D2A1F" stroke="#D5915F" stroke-width="1.15"/><path d="M9.8 13.5V7q0-2 2-2h.4M8 8.3h3.8" fill="none" stroke="#D5915F" stroke-width="1.2"/><ellipse cx="3.8" cy="3.8" rx="3.2" ry="1.9" transform="rotate(-45 3.8 3.8)" fill="#4E5055" stroke="#CED0D6" stroke-width="1.1"/><path d="M6.3 6.4l1.3 1.4" stroke="#CED0D6" stroke-width="1.1"/><path d="M5 9l4 4-4 4-4-4z" fill="#4E5055" stroke="#CED0D6" stroke-width="1.1" stroke-linejoin="round"/></svg><svg style="left:100px;top:533px" width="8" height="9"><rect x=".6" y="3.6" width="6.2" height="4.8" rx=".6" fill="#3A2327" stroke="#E55765" stroke-width="1.15"/><path d="M2 3.6V2.5a1.7 1.7 0 0 1 3.4 0v1.1" fill="none" stroke="#E55765" stroke-width="1.15"/></svg><div class="t" style="left:115px;top:531px;font-size:13.8px;color:#DFE1E5;letter-spacing:-0.3px;">PIN_BLUE: int = 25</div>
<div class="a" style="left:4px;top:46px;width:30px;height:30px;border-radius:6px;background:#43454A"></div>
<svg style="left:10px;top:54px" width="18" height="14"><path d="M.7 2q0-1.3 1.3-1.3h4.3l2.1 2.3h7.6q1.3 0 1.3 1.3v8.2q0 1.3-1.3 1.3H2q-1.3 0-1.3-1.3z" fill="none" stroke="#CED0D6" stroke-width="1.2"/></svg>
<svg style="left:9px;top:96px" width="20" height="10"><circle cx="10" cy="5" r="3.3" fill="none" stroke="#CED0D6" stroke-width="1.2"/><path d="M0 5h6.7M13.3 5H20" stroke="#CED0D6" stroke-width="1.2"/></svg>
<div class="a" style="left:7px;top:126px;width:24px;height:1px;background:#393B40"></div>
<div class="a" style="left:4px;top:137px;width:30px;height:30px;border-radius:6px;background:#43454A"></div>
<svg style="left:11px;top:143px" width="16" height="18"><path d="M.6 0v18M.6 5h4M.6 13h4" stroke="#CED0D6" stroke-width="1.2"/><rect x="4.6" y="1.6" width="10.8" height="6" rx="1" fill="none" stroke="#CED0D6" stroke-width="1.2"/><rect x="4.6" y="10" width="10.8" height="6" rx="1" fill="none" stroke="#CED0D6" stroke-width="1.2"/></svg>
<div class="a" style="left:11px;top:190px;width:3px;height:3px;border-radius:50%;background:#CED0D6"></div>
<div class="a" style="left:18px;top:190px;width:3px;height:3px;border-radius:50%;background:#CED0D6"></div>
<div class="a" style="left:25px;top:190px;width:3px;height:3px;border-radius:50%;background:#CED0D6"></div>
<svg style="left:9px;top:821px" width="20" height="18"><path d="M5 .7h10l4.5 8.3-4.5 8.3H5L.5 9z" fill="none" stroke="#CED0D6" stroke-width="1.2" stroke-linejoin="round"/><path d="M7.7 5v8l6.5-4z" fill="none" stroke="#CED0D6" stroke-width="1.2" stroke-linejoin="round"/></svg>
<div class="a" style="left:4px;top:855px;width:30px;height:30px;border-radius:6px;background:#3574F0"></div>
<svg style="left:10px;top:862px" width="18" height="16"><rect x=".7" y=".7" width="16.6" height="14.6" rx="1.5" fill="none" stroke="#fff" stroke-width="1.3"/><path d="M4 4.5l3 3-3 3M8.5 11.5h5" fill="none" stroke="#fff" stroke-width="1.3"/></svg>
<svg style="left:10px;top:901px" width="18" height="18"><circle cx="9" cy="9" r="8.3" fill="none" stroke="#CED0D6" stroke-width="1.2"/><path d="M9 4.3v6" stroke="#CED0D6" stroke-width="1.5"/><circle cx="9" cy="13.3" r="1" fill="#CED0D6"/></svg>
<svg style="left:10px;top:941px" width="17" height="18"><circle cx="3.5" cy="3.5" r="2.6" fill="none" stroke="#CED0D6" stroke-width="1.2"/><circle cx="13.5" cy="6.5" r="2.6" fill="none" stroke="#CED0D6" stroke-width="1.2"/><path d="M3.5 6.1V18M3.5 13.5h6q4 0 4-4V9.1" fill="none" stroke="#CED0D6" stroke-width="1.2"/></svg>
<svg style="left:1371px;top:52px" width="17" height="19"><path d="M8 1.5q-5.5 0-5.5 6v4.5L1 14.5h15l-1.5-2.5V7.5" fill="none" stroke="#CED0D6" stroke-width="1.2" stroke-linejoin="round"/><path d="M6.5 16.5h3l-1.5 1.5z" fill="#CED0D6" stroke="#CED0D6" stroke-width=".8"/></svg>
<div class="a" style="left:1382px;top:51px;width:8px;height:8px;border-radius:50%;background:#548AF7;box-shadow:0 0 0 1.5px #2B2D30"></div>
<svg style="left:1366px;top:88px" width="28" height="28"><path d="M6 6.6C10 5 17 5.5 20.7 11.5M16.5 11.2C14.5 8.8 9 8.5 6.5 11.5C4.5 14 5 18.5 11.5 20.2M12.3 12C10 12 8.8 14.5 11.8 16.8" fill="none" stroke="#CED0D6" stroke-width="1.3" stroke-linecap="round"/><path d="M15.7 13.4h5a2 2 0 0 1 2 2v7.6l-3-2.3h-4a2 2 0 0 1-2-2v-3.3a2 2 0 0 1 2-2z" fill="#2B2D30" stroke="#CED0D6" stroke-width="1.3" stroke-linejoin="round"/></svg>
<svg style="left:1371px;top:132px" width="17" height="19"><ellipse cx="8.5" cy="3.5" rx="7.8" ry="2.8" fill="none" stroke="#CED0D6" stroke-width="1.2"/><path d="M.7 3.5v12q0 2.8 7.8 2.8t7.8-2.8v-12M.7 7.5q0 2.8 7.8 2.8t7.8-2.8M.7 11.5q0 2.8 7.8 2.8t7.8-2.8" fill="none" stroke="#CED0D6" stroke-width="1.2"/></svg>
<svg style="left:1366px;top:166px" width="28" height="28"><circle cx="13" cy="15" r="8.4" fill="#CED0D6"/><path d="M4 15h18" stroke="#2B2D30" stroke-width="1.3"/><path d="M9.9 10.2L16.1 19.8M16.1 10.2L9.9 19.8M8.8 10h3M14.2 10h3M8.8 20h3M14.2 20h3" stroke="#2B2D30" stroke-width="3.4"/><path d="M9.9 10.2L16.1 19.8M16.1 10.2L9.9 19.8" stroke="#CED0D6" stroke-width="1.6"/></svg>
<svg style="left:412px;top:52px" width="17" height="17"><circle cx="8" cy="9" r="6.6" fill="#25324D" stroke="#548AF7" stroke-width="1.15"/><path d="M10.7 6.4A3.4 3.4 0 1 0 10.7 11.6" fill="none" stroke="#548AF7" stroke-width="1.15"/><path d="M9.6 1.3v7.1l6.1-3.5z" fill="#1F3A24" stroke="#1E1F22" stroke-width="2.6" stroke-linejoin="round" opacity=".0"/><path d="M9.6 1.5v6.7l5.9-3.3z" fill="#1F3A24" stroke="#5FB865" stroke-width="1.15" stroke-linejoin="round"/></svg><div class="t" style="left:433px;top:53px;font-size:13.5px;color:#DFE1E5">Pi4JRgbLed.java</div>
<svg style="left:433px;top:68px" width="101" height="3"><path d="M0 2 L0 2 L2 0 L4 2 L6 0 L8 2 L10 0 L12 2 L14 0 L16 2 L18 0 L20 2 L22 0 L24 2 L26 0 L28 2 L30 0 L32 2 L34 0 L36 2 L38 0 L40 2 L42 0 L44 2 L46 0 L48 2 L50 0 L52 2 L54 0 L56 2 L58 0 L60 2 L62 0 L64 2 L66 0 L68 2 L70 0 L72 2 L74 0 L76 2 L78 0 L80 2 L82 0 L84 2 L86 0 L88 2 L90 0 L92 2 L94 0 L96 2 L98 0 L100 2" fill="none" stroke="#E55765" stroke-width=".9"/></svg>
<svg style="left:545px;top:57px" width="8" height="8"><path d="M.5 .5l7 7M7.5 .5l-7 7" stroke="#808389" stroke-width="1.1"/></svg>
<div class="a" style="left:400px;top:78px;width:165px;height:4px;border-radius:2px;background:#5E6168"></div>
<div class="a" style="left:566px;top:81px;width:792px;height:1px;background:#393B40"></div>
<div class="a" style="left:1338px;top:55px;width:2px;height:2px;background:#CED0D6;box-shadow:0 5px 0 #CED0D6,0 10px 0 #CED0D6"></div>
<svg style="left:1221px;top:89px" width="13" height="13"><circle cx="6.5" cy="6.5" r="6" fill="#E55765"/><path d="M6.5 3v4.5" stroke="#1E1F22" stroke-width="1.6"/><circle cx="6.5" cy="9.8" r=".9" fill="#1E1F22"/></svg>
<div class="t" style="left:1236px;top:87px;font-size:13px;color:#BCBEC4;">29</div>
<svg style="left:1258px;top:89px" width="13" height="12"><path d="M6.5 .5l6 11h-12z" fill="#D6AE58" stroke="#D6AE58" stroke-linejoin="round"/><path d="M6.5 4v3.5" stroke="#1E1F22" stroke-width="1.5"/><circle cx="6.5" cy="9.3" r=".8" fill="#1E1F22"/></svg>
<div class="t" style="left:1274px;top:87px;font-size:13px;color:#BCBEC4;">3</div>
<svg style="left:1287px;top:89px" width="13" height="13"><path d="M1 5l3.5 3.5L12 1" fill="none" stroke="#5FB865" stroke-width="1.5"/><path d="M1 12l2-2 2 2 2-2 2 2 2-2" fill="none" stroke="#5FB865" stroke-width="1"/></svg>
<div class="t" style="left:1303px;top:87px;font-size:13px;color:#BCBEC4;">5</div>
<svg style="left:1321px;top:93px" width="9" height="5"><path d="M.5 4.5l4-4 4 4" fill="none" stroke="#CED0D6" stroke-width="1.1"/></svg>
<svg style="left:1342px;top:93px" width="9" height="5"><path d="M.5 .5l4 4 4-4" fill="none" stroke="#CED0D6" stroke-width="1.1"/></svg>
<div class="a" style="left:1344px;top:125px;width:14px;height:30px;background:#C9A95C"></div>
<div class="a" style="left:1344px;top:155px;width:14px;height:2px;background:#5E8C7A"></div>
<div class="a" style="left:1348px;top:110px;width:7px;height:97px;border-radius:4px;background:rgba(160,162,168,.22);box-shadow:inset 0 0 0 1px rgba(0,0,0,.25)"></div>
<div class="a" style="left:1344px;top:116px;width:14px;height:2px;background:#E55765"></div>
<div class="a" style="left:1344px;top:208px;width:14px;height:2px;background:#E55765"></div>
<div class="a" style="left:1344px;top:221px;width:14px;height:2px;background:#E55765"></div>
<div class="a" style="left:1344px;top:225px;width:14px;height:2px;background:#E55765"></div>
<div class="a" style="left:1344px;top:230px;width:14px;height:2px;background:#E55765"></div>
<div class="a" style="left:1344px;top:243px;width:14px;height:2px;background:#E55765"></div>
<div class="a" style="left:1344px;top:247px;width:14px;height:2px;background:#E55765"></div>
<div class="a" style="left:1344px;top:251px;width:14px;height:2px;background:#E55765"></div>
<div class="a" style="left:1344px;top:291px;width:14px;height:2px;background:#E55765"></div>
<div class="a" style="left:1344px;top:295px;width:14px;height:2px;background:#E55765"></div>
<div class="a" style="left:1344px;top:299px;width:14px;height:2px;background:#E55765"></div>
<div class="a" style="left:1344px;top:339px;width:14px;height:2px;background:#E55765"></div>
<div class="a" style="left:1344px;top:343px;width:14px;height:2px;background:#E55765"></div>
<div class="a" style="left:1344px;top:347px;width:14px;height:2px;background:#E55765"></div>
<div class="a" style="left:1344px;top:370px;width:14px;height:2px;background:#E55765"></div>
<div class="a" style="left:1344px;top:374px;width:14px;height:2px;background:#E55765"></div>
<div class="a" style="left:1344px;top:378px;width:14px;height:2px;background:#E55765"></div>
<div class="a" style="left:1344px;top:400px;width:14px;height:2px;background:#E55765"></div>
<div class="a" style="left:1344px;top:413px;width:14px;height:2px;background:#E55765"></div>
<div class="a" style="left:1344px;top:417px;width:14px;height:2px;background:#E55765"></div>
<div class="a" style="left:1344px;top:430px;width:14px;height:2px;background:#E55765"></div>
<div class="a" style="left:1344px;top:452px;width:14px;height:2px;background:#E55765"></div>
<div class="a" style="left:1344px;top:456px;width:14px;height:2px;background:#E55765"></div>
<div class="a" style="left:1344px;top:483px;width:14px;height:2px;background:#E55765"></div>
<div class="a" style="left:1344px;top:544px;width:14px;height:2px;background:#E55765"></div>
<div class="a" style="left:1344px;top:552px;width:14px;height:2px;background:#E55765"></div>
<div class="a" style="left:1344px;top:565px;width:14px;height:2px;background:#E55765"></div>
<div class="a" style="left:1344px;top:574px;width:14px;height:2px;background:#E55765"></div>
<div class="a" style="left:1344px;top:195px;width:14px;height:2px;background:#D6AE58"></div>
<svg style="left:460px;top:90px" width="6" height="9"><path d="M.6 .6l4 3.9-4 3.9" fill="none" stroke="#6F737A" stroke-width="1.1"/></svg>
<svg style="left:460px;top:138px" width="6" height="9"><path d="M.6 .6l4 3.9-4 3.9" fill="none" stroke="#6F737A" stroke-width="1.1"/></svg>
<svg style="left:437px;top:350px" width="15" height="15"><path d="M1.5 1.3V13.7L13.9 7.5z" fill="#1F3A24" stroke="#5FB865" stroke-width="1.3" stroke-linejoin="round"/></svg>
<svg style="left:437px;top:566px" width="15" height="15"><path d="M1.5 1.3V13.7L13.9 7.5z" fill="#1F3A24" stroke="#5FB865" stroke-width="1.3" stroke-linejoin="round"/></svg>
<div class="a" style="left:511px;top:587px;width:1px;height:53px;background:#313438"></div>
<svg style="left:504px;top:314px" width="42" height="3"><path d="M0 2 L0 2 L2 0 L4 2 L6 0 L8 2 L10 0 L12 2 L14 0 L16 2 L18 0 L20 2 L22 0 L24 2 L26 0 L28 2 L30 0 L32 2 L34 0 L36 2 L38 0 L40 2 L42 0" fill="none" stroke="#5FB865" stroke-width=".9"/></svg>
<div class="a" style="left:802.5px;top:638px;width:2px;height:2px;background:#9A9CA0"></div>
<div class="a" style="left:807.5px;top:638px;width:2px;height:2px;background:#9A9CA0"></div>
<svg style="left:703px;top:352px" width="11" height="12"><circle cx="5.5" cy="3.3" r="2.7" fill="none" stroke="#9A9DA3" stroke-width="1.1"/><path d="M.6 11.4q0-4.6 4.9-4.6t4.9 4.6z" fill="none" stroke="#9A9DA3" stroke-width="1.1" stroke-linejoin="round"/></svg><div class="hint" style="left:718px;top:346px;font-size:13.5px">Frank Delporte</div>
<svg style="left:1005px;top:568px" width="11" height="12"><circle cx="5.5" cy="3.3" r="2.7" fill="none" stroke="#9A9DA3" stroke-width="1.1"/><path d="M.6 11.4q0-4.6 4.9-4.6t4.9 4.6z" fill="none" stroke="#9A9DA3" stroke-width="1.1" stroke-linejoin="round"/></svg><div class="hint" style="left:1020px;top:562px;font-size:13.5px">Frank Delporte</div>
<div class="hint" style="left:845px;top:418px">1 usage</div>
<div class="hint" style="left:862px;top:466px">1 usage</div>
<div class="hint" style="left:853px;top:514px">1 usage</div>
<svg style="left:13px;top:981px" width="8" height="8"><rect x=".6" y=".6" width="6.8" height="6.8" rx="1.2" fill="#25324D" stroke="#548AF7" stroke-width="1.2"/></svg>
<div class="t" style="left:25px;top:977px;font-size:13.5px;color:#A8AAB0;">pi4j-jbang</div>
<svg style="left:96px;top:980px" width="6" height="9"><path d="M.6 .6l4 3.9-4 3.9" fill="none" stroke="#A8AAB0" stroke-width="1.1"/></svg>
<svg style="left:112px;top:977px" width="15" height="15"><circle cx="7.5" cy="7.5" r="6.7" fill="none" stroke="#548AF7" stroke-width="1.3"/><path d="M10 5.5a3.2 3.2 0 1 0 0 4" fill="none" stroke="#548AF7" stroke-width="1.3"/></svg>
<div class="t" style="left:131px;top:977px;font-size:13.5px;color:#A8AAB0;">Pi4JRgbLed</div>
<svg style="left:999px;top:978px" width="10" height="15"><path d="M3 10.5q0-2-1.5-3.5A4.3 4.3 0 1 1 8.5 7q-1.5 1.5-1.5 3.5z" fill="none" stroke="#A8AAB0" stroke-width="1.1" stroke-linejoin="round"/><path d="M3 12.3h4M3.5 14h3" stroke="#A8AAB0" stroke-width="1.1"/></svg>
<div class="t" style="left:1028px;top:977px;font-size:13.5px;color:#A8AAB0;">19:14</div>
<div class="t" style="left:1076px;top:977px;font-size:13.5px;color:#A8AAB0;">LF</div>
<div class="t" style="left:1107px;top:977px;font-size:13.5px;color:#A8AAB0;">UTF-8</div>
<svg style="left:1163px;top:977px" width="15" height="16"><path d="M9 14.5H2q-1.3 0-1.3-1.3V2q0-1.3 1.3-1.3h8q1.3 0 1.3 1.3v5" fill="none" stroke="#A8AAB0" stroke-width="1.1"/><path d="M3 4h6M3 6.5h6M3 9h3" stroke="#A8AAB0" stroke-width="1.1"/><circle cx="10.5" cy="11" r="2.3" fill="none" stroke="#A8AAB0" stroke-width="1.1"/><path d="M12.2 12.7l2 2" stroke="#A8AAB0" stroke-width="1.1"/></svg>
<div class="t" style="left:1189px;top:977px;font-size:13.5px;color:#A8AAB0;">4 spaces</div>
<svg style="left:1264px;top:979px" width="14" height="12"><rect x=".6" y="5" width="8.5" height="6.4" rx="1" fill="none" stroke="#A8AAB0" stroke-width="1.1"/><path d="M6.8 5V3a2.6 2.6 0 0 1 5.2 0v1" fill="none" stroke="#A8AAB0" stroke-width="1.1"/><circle cx="4.85" cy="8.2" r=".8" fill="#A8AAB0"/></svg>
<div class="a" style="left:1285px;top:971px;width:29px;height:28px;background:#26375A"></div>
<div class="a" style="left:1314px;top:971px;width:22px;height:28px;background:#1F2023"></div>
<div class="t" style="left:1295px;top:977px;font-size:13.5px;color:#A8AAB0;">341 of 1200M</div>
<div class="a" style="left:0;top:970px;width:1397px;height:1px;background:#1E1F22"></div>
<div class="a" style="left:0;top:0;width:1397px;height:999px;border-radius:10px;box-shadow:inset 0 1px 0 #6F7175,inset 0 2px 0 #25262A;pointer-events:none"></div>
</div>
</body></html>
